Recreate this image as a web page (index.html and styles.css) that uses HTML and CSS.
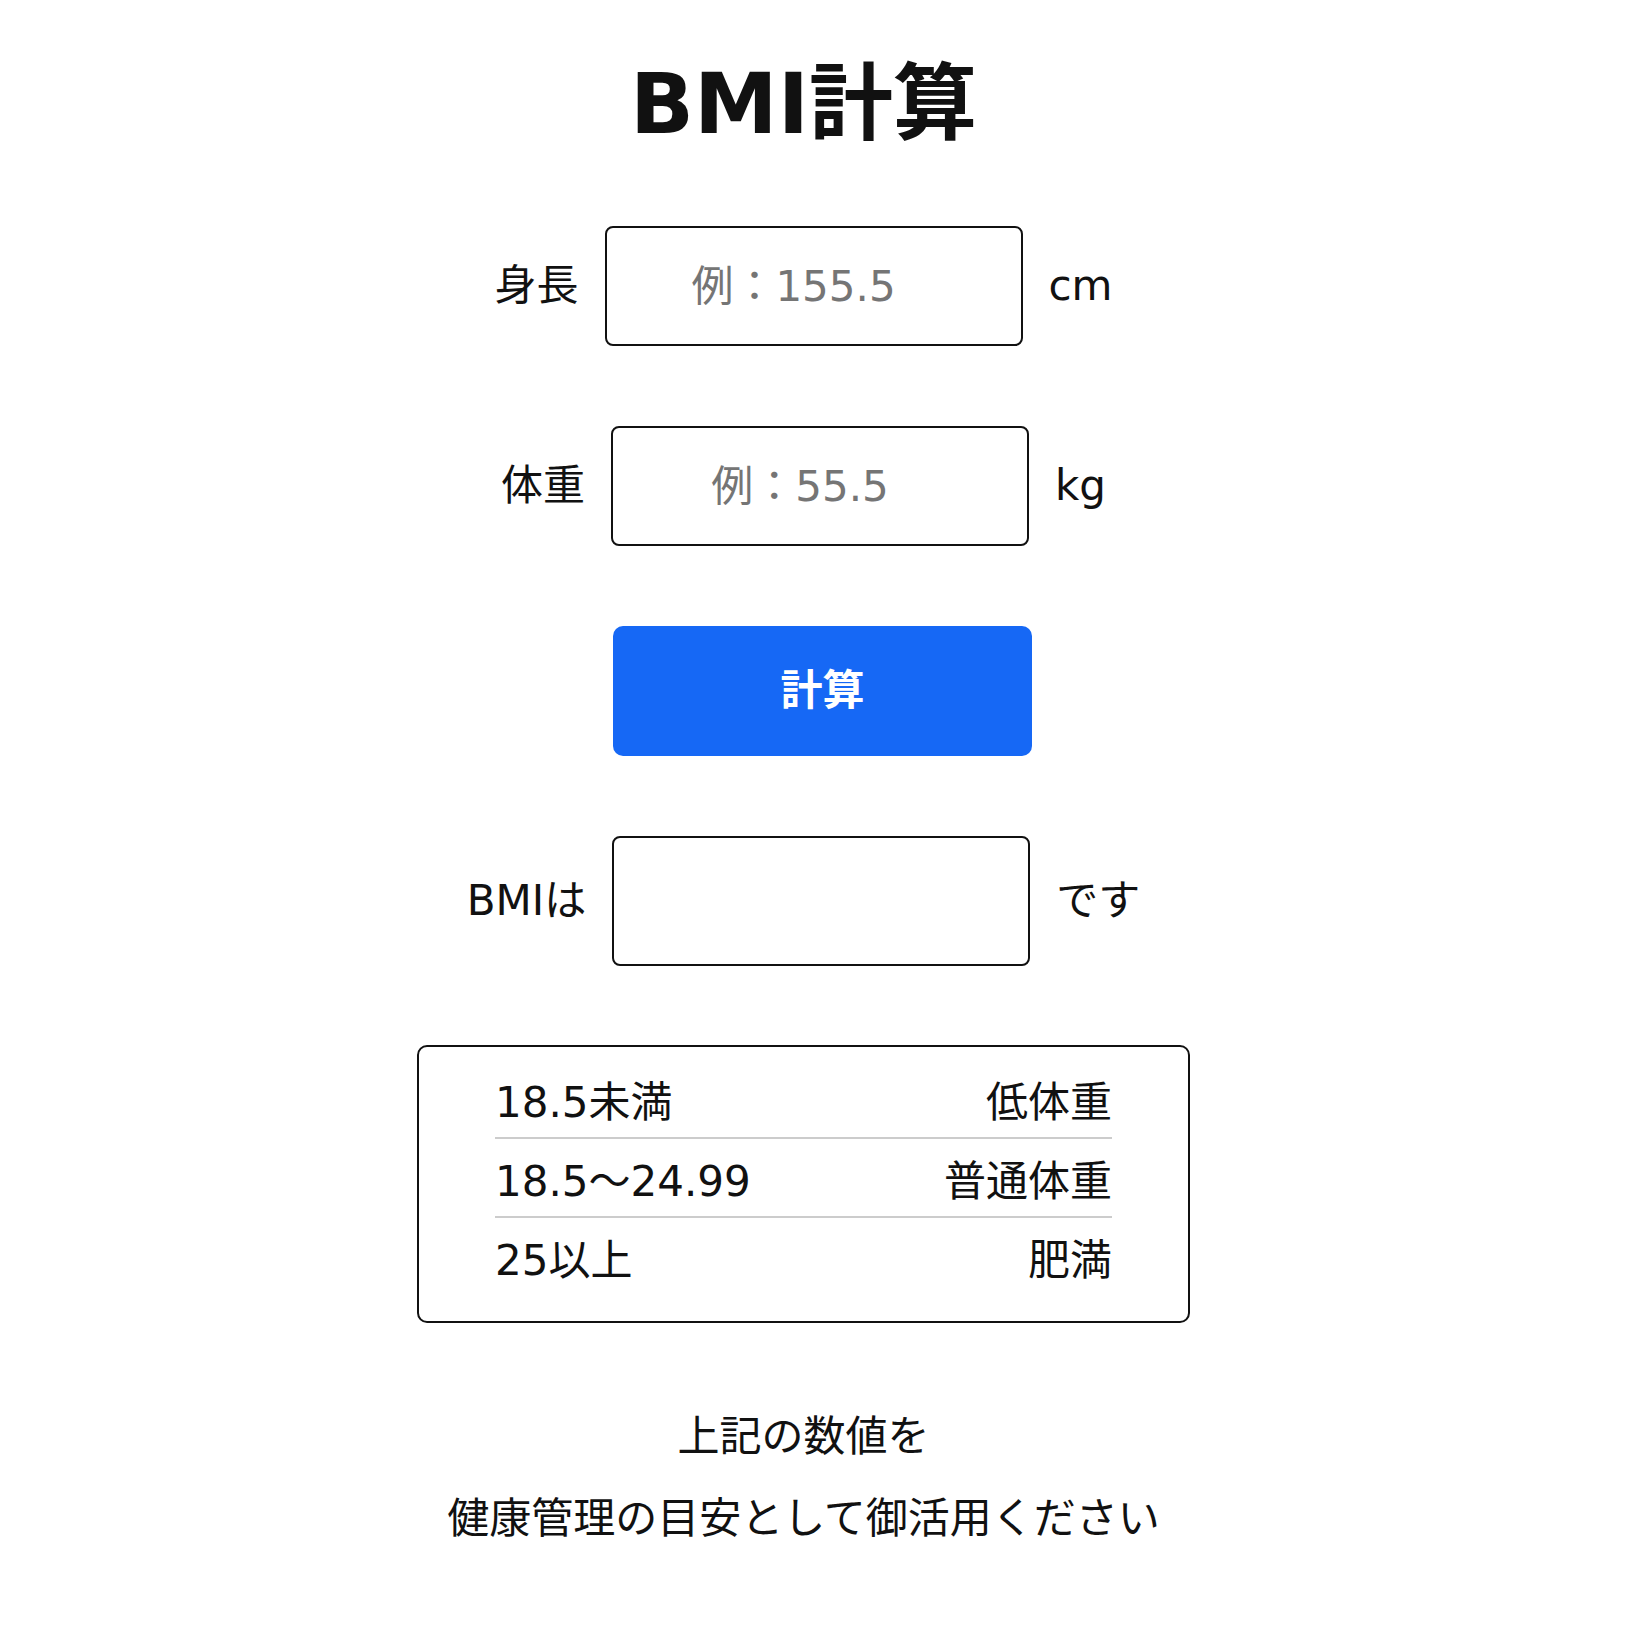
FILE: index.html
```html
<!DOCTYPE html>
<html lang="ja">
<head>
<meta charset="utf-8">
<title>BMI計算</title>
<link rel="stylesheet" href="styles.css">
</head>
<body>
<main class="page">
  <h1 class="title">BMI計算</h1>
  <div class="row row-first">
    <label class="label" for="height">身長</label>
    <input class="field" id="height" type="text" placeholder="例：155.5">
    <span class="unit">cm</span>
  </div>
  <div class="row">
    <label class="label" for="weight">体重</label>
    <input class="field" id="weight" type="text" placeholder="例：55.5">
    <span class="unit">kg</span>
  </div>
  <div class="row">
    <button class="calc" type="button">計算</button>
  </div>
  <div class="row">
    <span class="label">BMIは</span>
    <output class="result"></output>
    <span class="unit">です</span>
  </div>
  <div class="table">
    <div class="table-row"><span>18.5未満</span><span>低体重</span></div>
    <div class="table-row"><span>18.5〜24.99</span><span>普通体重</span></div>
    <div class="table-row"><span>25以上</span><span>肥満</span></div>
  </div>
  <p class="note">上記の数値を<br>健康管理の目安として御活用ください</p>
</main>
</body>
</html>
```
FILE: styles.css
```css
html, body {
  margin: 0;
  background: #ffffff;
}

body {
  color: #111111;
  font-family: "DejaVu Sans", "Noto Sans CJK JP", sans-serif;
  font-size: 42px;
}

.page {
  display: flex;
  flex-direction: column;
  align-items: center;
  padding: 54px 20px 40px 0;
}

.title {
  margin: 0;
  font-size: 84px;
  line-height: 100px;
  font-weight: 700;
}

.row {
  display: flex;
  align-items: center;
  gap: 26px;
  margin-top: 80px;
  line-height: 1.2;
}

.row-first {
  margin-top: 72px;
}

.label,
.unit {
  white-space: nowrap;
}

.field {
  box-sizing: border-box;
  width: 418px;
  height: 120px;
  margin: 0;
  padding: 0 40px 0 0;
  border: 2px solid #111111;
  border-radius: 8px;
  background: #ffffff;
  font: inherit;
  color: #111111;
  text-align: center;
  outline: none;
}

.field::placeholder {
  color: #757575;
  opacity: 1;
}

.calc {
  box-sizing: border-box;
  width: 419px;
  height: 130px;
  margin: 0 0 0 38px;
  padding: 0;
  border: 0;
  border-radius: 10px;
  background: #1668f5;
  color: #ffffff;
  font: inherit;
  font-weight: 700;
  cursor: pointer;
}

.result {
  display: block;
  box-sizing: border-box;
  width: 418px;
  height: 130px;
  border: 2px solid #111111;
  border-radius: 8px;
}

.table {
  box-sizing: border-box;
  width: 773px;
  margin-top: 79px;
  padding: 13px 76px 26px;
  border: 2px solid #111111;
  border-radius: 10px;
}

.table-row {
  display: flex;
  justify-content: space-between;
  align-items: center;
  height: 77px;
  border-bottom: 2px solid #cccccc;
}

.table-row:last-child {
  border-bottom: 0;
}

.note {
  margin: 73px 0 0;
  text-align: center;
  line-height: 82px;
}
```
